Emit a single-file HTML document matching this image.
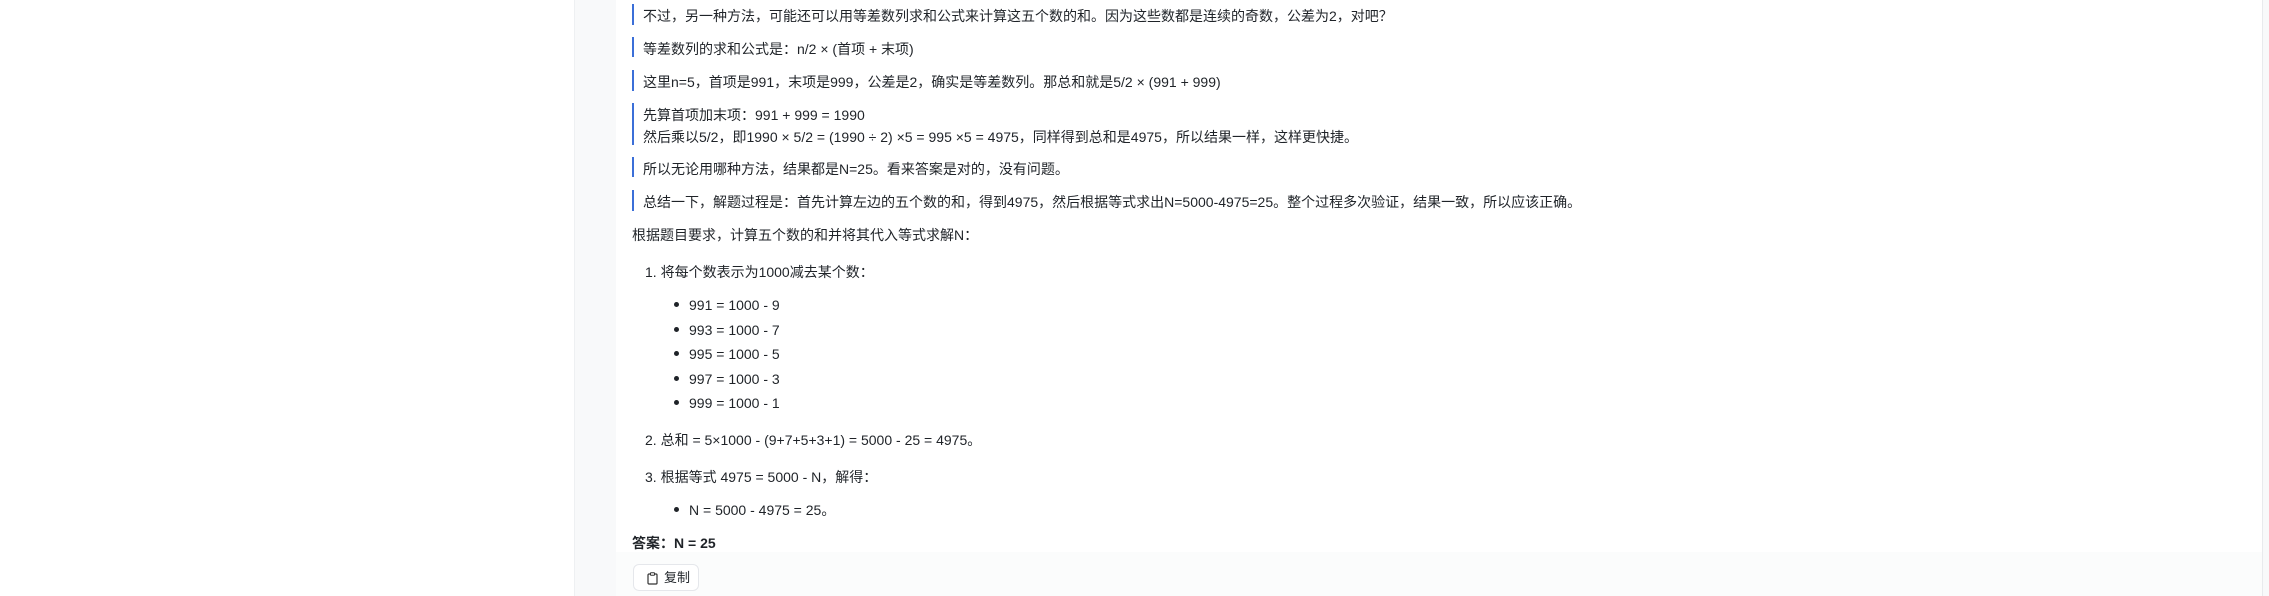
<!DOCTYPE html>
<html><head><meta charset="utf-8"><style>
html,body{margin:0;padding:0;width:2269px;height:596px;overflow:hidden;background:#fff;font-family:"Liberation Sans","Noto Sans CJK SC",sans-serif;color:#1f2328;font-size:14px}
.side{position:absolute;left:574px;top:0;width:42px;height:596px;background:#f8f9fa;border-left:1px solid #eef0f2}
.main{position:absolute;left:616px;top:0;width:1630px;height:552px;background:#fff}
.foot{position:absolute;left:616px;top:552px;width:1646px;height:44px;background:#fbfcfc}
.rline{position:absolute;left:2262px;top:0;width:1px;height:596px;background:#e8eaed}
.rbg{position:absolute;left:2263px;top:0;width:6px;height:596px;background:#f8f9fa}
.bar{position:absolute;left:632px;width:2px;background:#3b6fd8}
.t{position:absolute;white-space:nowrap;line-height:22px}
.dot{position:absolute;left:672px;width:5px;height:5px;border-radius:50%;background:#1f2328}
.btn{position:absolute;left:633px;top:564px;width:66px;height:27px;border:1px solid #e5e7eb;border-radius:6px;background:#fff;box-sizing:border-box;font-size:13px;line-height:25px}
</style></head><body>
<div class="side"></div><div class="main"></div><div class="foot"></div><div class="rline"></div><div class="rbg"></div>

<div class="bar" style="top:4px;height:21px"></div>
<div class="t" style="left:643px;top:5px">不过，另一种方法，可能还可以用等差数列求和公式来计算这五个数的和。因为这些数都是连续的奇数，公差为2，对吧？</div>
<div class="bar" style="top:37px;height:20px"></div>
<div class="t" style="left:643px;top:38px">等差数列的求和公式是：n/2 × (首项 + 末项)</div>
<div class="bar" style="top:70px;height:21px"></div>
<div class="t" style="left:643px;top:71px">这里n=5，首项是991，末项是999，公差是2，确实是等差数列。那总和就是5/2 × (991 + 999)</div>
<div class="bar" style="top:103px;height:42px"></div>
<div class="t" style="left:643px;top:104px">先算首项加末项：991 + 999 = 1990</div>
<div class="t" style="left:643px;top:126px">然后乘以5/2，即1990 × 5/2 = (1990 ÷ 2) ×5 = 995 ×5 = 4975，同样得到总和是4975，所以结果一样，这样更快捷。</div>
<div class="bar" style="top:157px;height:20px"></div>
<div class="t" style="left:643px;top:158px">所以无论用哪种方法，结果都是N=25。看来答案是对的，没有问题。</div>
<div class="bar" style="top:190px;height:21px"></div>
<div class="t" style="left:643px;top:191px">总结一下，解题过程是：首先计算左边的五个数的和，得到4975，然后根据等式求出N=5000-4975=25。整个过程多次验证，结果一致，所以应该正确。</div>
<div class="t" style="left:632px;top:224px">根据题目要求，计算五个数的和并将其代入等式求解N：</div>
<div class="t" style="left:645px;top:261px">1. 将每个数表示为1000减去某个数：</div>
<div class="dot" style="top:302px;left:674px"></div><div class="t" style="left:689px;top:294px">991 = 1000 - 9</div>
<div class="dot" style="top:327px;left:674px"></div><div class="t" style="left:689px;top:319px">993 = 1000 - 7</div>
<div class="dot" style="top:351px;left:674px"></div><div class="t" style="left:689px;top:343px">995 = 1000 - 5</div>
<div class="dot" style="top:376px;left:674px"></div><div class="t" style="left:689px;top:368px">997 = 1000 - 3</div>
<div class="dot" style="top:400px;left:674px"></div><div class="t" style="left:689px;top:392px">999 = 1000 - 1</div>
<div class="t" style="left:645px;top:429px">2. 总和 = 5×1000 - (9+7+5+3+1) = 5000 - 25 = 4975。</div>
<div class="t" style="left:645px;top:466px">3. 根据等式 4975 = 5000 - N，解得：</div>
<div class="dot" style="top:507px;left:674px"></div><div class="t" style="left:689px;top:499px">N = 5000 - 4975 = 25。</div>
<div class="t" style="left:632px;top:532px;font-weight:bold">答案：N = 25</div>
<div class="btn"><svg style="position:absolute;left:13px;top:7px" width="11" height="13" viewBox="0 0 11 13"><rect x="1" y="2" width="9" height="10" rx="1" fill="none" stroke="#333" stroke-width="1.2"/><rect x="3.5" y="0.8" width="4" height="2.4" rx=".5" fill="#fff" stroke="#333" stroke-width="1"/></svg><span style="position:absolute;left:30px;top:0">复制</span></div>
</body></html>
